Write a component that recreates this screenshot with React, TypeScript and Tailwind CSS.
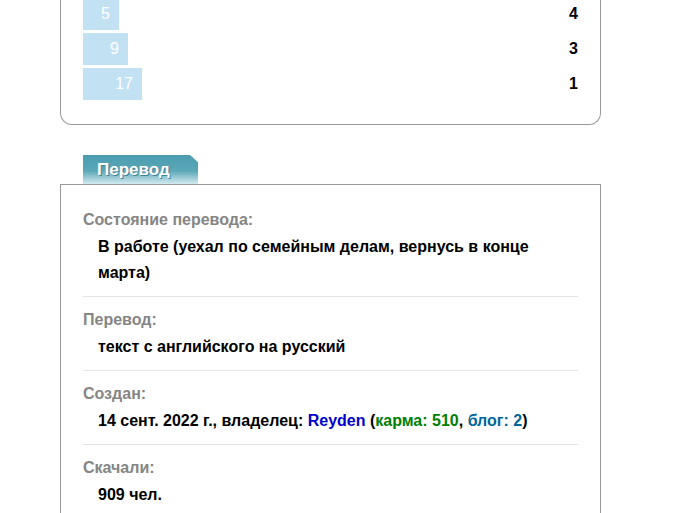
import React from 'react';

interface Bar {
  value: number;
  width: number;
  count: number;
}

interface InfoItem {
  label: string;
  value: React.ReactNode;
}

const bars: Bar[] = [
  { value: 5, width: 36, count: 4 },
  { value: 9, width: 45, count: 3 },
  { value: 17, width: 59, count: 1 },
];

const items: InfoItem[] = [
  {
    label: 'Состояние перевода:',
    value: 'В работе (уехал по семейным делам, вернусь в конце марта)',
  },
  { label: 'Перевод:', value: 'текст с английского на русский' },
  {
    label: 'Создан:',
    value: (
      <>
        14 сент. 2022 г., владелец: <span className="text-[#0000cc]">Reyden</span> (
        <span className="text-[#008000]">карма: 510</span>,{' '}
        <span className="text-[#006699]">блог: 2</span>)
      </>
    ),
  },
  { label: 'Скачали:', value: '909 чел.' },
];

const App: React.FC = () => {
  return (
    <div className="min-h-[513px] bg-white font-['Liberation_Sans',Arial,sans-serif] text-[16px] overflow-hidden">
      <div className="ml-[60px] w-[541px]">
        {/* stats card, top part scrolled off */}
        <div className="-mt-[2px] border-x border-b border-[#999] rounded-b-[12px] px-[22px] pb-[24px]">
          <div className="flex flex-col gap-[3px]">
            {bars.map((bar) => (
              <div key={bar.value} className="flex items-center justify-between h-[32px]">
                <div
                  className="h-[32px] bg-[#c2e1f3] text-white text-right pr-[9px] leading-[32px]"
                  style={{ width: bar.width }}
                >
                  {bar.value}
                </div>
                <span className="font-bold text-black">{bar.count}</span>
              </div>
            ))}
          </div>
        </div>

        {/* translation block */}
        <div className="mt-[30px] pl-[23px]">
          <div className="w-[115px] h-[29px] pl-[14px] bg-linear-to-b from-[#4a9cae] via-[#5aa8b8] via-55% to-[#d2eaf0] [clip-path:polygon(0_0,93%_0,100%_25%,100%_100%,0_100%)]">
            <span className="text-white font-bold text-[17px] leading-[29px] [text-shadow:1px_1px_0_#3c8597]">
              Перевод
            </span>
          </div>
        </div>
        <div className="border border-[#999] pt-[12px] px-[22px]">
          {items.map((item) => (
            <div key={item.label} className="pt-[10px] pb-[10px] border-b border-[#e5e5e5] font-bold">
              <div className="text-[#858585] leading-[26px]">{item.label}</div>
              <div className="pt-[1px] pl-[15px] text-black leading-[26px]">{item.value}</div>
            </div>
          ))}
        </div>
      </div>
    </div>
  );
};

export default App;
